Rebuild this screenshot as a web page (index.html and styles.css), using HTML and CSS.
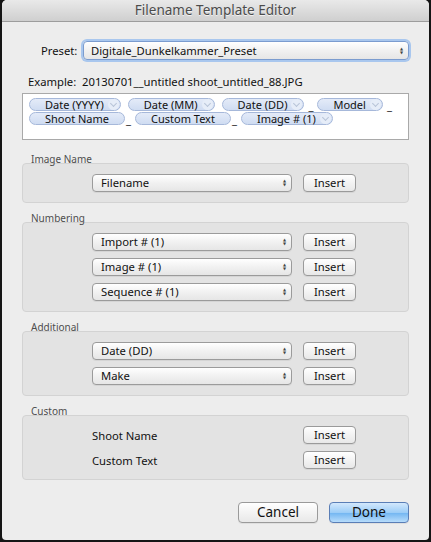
FILE: index.html
```html
<!DOCTYPE html>
<html lang="en">
<head>
  <meta charset="UTF-8">
  <title>Filename Template Editor</title>
  <link rel="stylesheet" href="styles.css">
</head>
<body>
  <div class="window">
    <div class="titlebar">Filename Template Editor</div>

    <div class="content">
      <div class="preset-row">
        <span class="preset-label">Preset:</span>
        <div class="popup popup-focus">
          <span>Digitale_Dunkelkammer_Preset</span>
          <span class="arrows">&#9650;<br>&#9660;</span>
        </div>
      </div>

      <div class="example">Example:&nbsp; 20130701__untitled shoot_untitled_88.JPG</div>

      <div class="token-box">
        <div class="token-line">
          <span class="token">Date (YYYY)<i class="chev"></i></span>
          <span class="token">Date (MM)<i class="chev"></i></span>
          <span class="token">Date (DD)<i class="chev"></i></span><span class="sep">_</span>
          <span class="token">Model<i class="chev"></i></span><span class="sep">_</span>
        </div>
        <div class="token-line">
          <span class="token plain">Shoot Name</span><span class="sep">_</span>
          <span class="token plain">Custom Text</span><span class="sep">_</span>
          <span class="token">Image # (1)<i class="chev"></i></span>
        </div>
      </div>

      <div class="group-label first">Image Name</div>
      <div class="group">
        <div class="row">
          <div class="popup"><span>Filename</span><span class="arrows">&#9650;<br>&#9660;</span></div>
          <button class="btn">Insert</button>
        </div>
      </div>

      <div class="group-label">Numbering</div>
      <div class="group">
        <div class="row">
          <div class="popup"><span>Import # (1)</span><span class="arrows">&#9650;<br>&#9660;</span></div>
          <button class="btn">Insert</button>
        </div>
        <div class="row">
          <div class="popup"><span>Image # (1)</span><span class="arrows">&#9650;<br>&#9660;</span></div>
          <button class="btn">Insert</button>
        </div>
        <div class="row">
          <div class="popup"><span>Sequence # (1)</span><span class="arrows">&#9650;<br>&#9660;</span></div>
          <button class="btn">Insert</button>
        </div>
      </div>

      <div class="group-label">Additional</div>
      <div class="group">
        <div class="row">
          <div class="popup"><span>Date (DD)</span><span class="arrows">&#9650;<br>&#9660;</span></div>
          <button class="btn">Insert</button>
        </div>
        <div class="row">
          <div class="popup"><span>Make</span><span class="arrows">&#9650;<br>&#9660;</span></div>
          <button class="btn">Insert</button>
        </div>
      </div>

      <div class="group-label">Custom</div>
      <div class="group">
        <div class="row">
          <div class="custom-name">Shoot Name</div>
          <button class="btn">Insert</button>
        </div>
        <div class="row">
          <div class="custom-name">Custom Text</div>
          <button class="btn">Insert</button>
        </div>
      </div>

      <div class="actions">
        <button class="btn big">Cancel</button>
        <button class="btn big default">Done</button>
      </div>
    </div>
  </div>
</body>
</html>
```

FILE: styles.css
```css
html, body {
  margin: 0;
  padding: 0;
  height: 100%;
}

body {
  background: #151515;
  font-family: 'Noto Sans', 'DejaVu Sans', sans-serif;
  font-size: 11.25px;
  color: #111;
  overflow: hidden;
}

.window {
  margin-left: 2px;
  width: 427px;
  height: 540px;
  background: #ededed;
  border-radius: 5px 5px 4px 4px;
  overflow: hidden;
}

.titlebar {
  height: 21px;
  line-height: 21px;
  text-align: center;
  font-size: 13.5px;
  color: #4b4b4b;
  text-shadow: 0 1px 0 rgba(255, 255, 255, 0.7);
  background: linear-gradient(#e9e9e9, #cfcfcf);
  border-bottom: 1px solid #9d9d9d;
}

.content {
  padding: 19px 20px 0 20px;
}

.preset-row {
  display: flex;
  align-items: center;
  height: 19px;
}

.preset-label {
  margin-left: 19px;
  width: 42px;
}

.popup {
  display: flex;
  align-items: center;
  justify-content: space-between;
  box-sizing: border-box;
  height: 18px;
  width: 200px;
  padding: 0 5px 0 8px;
  line-height: 16px;
  white-space: nowrap;
  background: linear-gradient(#ffffff, #f1f1f1 50%, #e6e6e6);
  border: 1px solid #9b9b9b;
  border-radius: 4px;
  box-shadow: 0 1px 0 rgba(0, 0, 0, 0.06);
}

.popup-focus {
  width: 326px;
  height: 19px;
  border-color: #7b9ccf;
  box-shadow: 0 0 0 2px #a9c7ee;
  padding-left: 7px;
}

.arrows {
  font-family: 'DejaVu Sans', sans-serif;
  font-size: 4px;
  line-height: 4px;
  color: #444;
  text-align: center;
}

.example {
  margin: 15px 0 0 6px;
  height: 13px;
  line-height: 13px;
  white-space: nowrap;
}

.token-box {
  margin-top: 5px;
  height: 47px;
  box-sizing: border-box;
  background: #fff;
  border: 1px solid #a9a9a9;
  padding: 3px 6px 0 6px;
}

.token-line {
  display: flex;
  align-items: center;
  height: 14px;
  white-space: nowrap;
}

.token {
  display: inline-flex;
  align-items: center;
  height: 13px;
  box-sizing: border-box;
  padding: 0 1px 0 15px;
  margin-right: 7px;
  font-size: 11px;
  line-height: 11px;
  background: linear-gradient(#e4ebf8, #cfdcf2);
  border: 1px solid #a6b8da;
  border-radius: 7px;
}

.token.plain {
  padding-right: 15px;
  margin-right: 4px;
}

.chev {
  position: relative;
  width: 11px;
  height: 11px;
  margin-left: 4px;
  border-radius: 50%;
  background: #e6edf8;
}

.chev::after {
  content: "";
  position: absolute;
  left: 3px;
  top: 2px;
  width: 4px;
  height: 4px;
  border-right: 1px solid #b8c4d8;
  border-bottom: 1px solid #b8c4d8;
  transform: rotate(45deg);
}

.sep {
  margin: 0 4px 0 -3px;
  align-self: flex-end;
  line-height: 10px;
}

.group-label {
  margin: 8px 0 0 9px;
  height: 11px;
  line-height: 14px;
  font-size: 10px;
  color: #4e4e4e;
}

.group-label.first {
  margin-top: 12px;
}

.group {
  box-sizing: border-box;
  background: #e3e3e3;
  border: 1px solid #d3d3d3;
  border-radius: 4px;
  padding: 10px 0 10px 69px;
  display: flex;
  flex-direction: column;
  gap: 7px;
}

.row {
  display: flex;
  align-items: center;
  gap: 11px;
  height: 18px;
}

.custom-name {
  width: 200px;
}

.btn {
  box-sizing: border-box;
  width: 53px;
  height: 18px;
  padding: 0;
  font-family: inherit;
  font-size: 11.25px;
  line-height: 16px;
  color: #111;
  background: linear-gradient(#ffffff, #f3f3f3 50%, #e8e8e8);
  border: 1px solid #9a9a9a;
  border-radius: 4px;
  box-shadow: 0 1px 0 rgba(0, 0, 0, 0.06);
}

.actions {
  display: flex;
  justify-content: flex-end;
  gap: 11px;
  margin-top: 22px;
}

.btn.big {
  width: 80px;
  height: 21px;
  font-size: 13.5px;
  line-height: 19px;
}

.btn.default {
  background: linear-gradient(#d3e8fc, #9ccdf7 50%, #76b8f2 55%, #b7dcfb);
  border-color: #5a7eb6;
}
```
